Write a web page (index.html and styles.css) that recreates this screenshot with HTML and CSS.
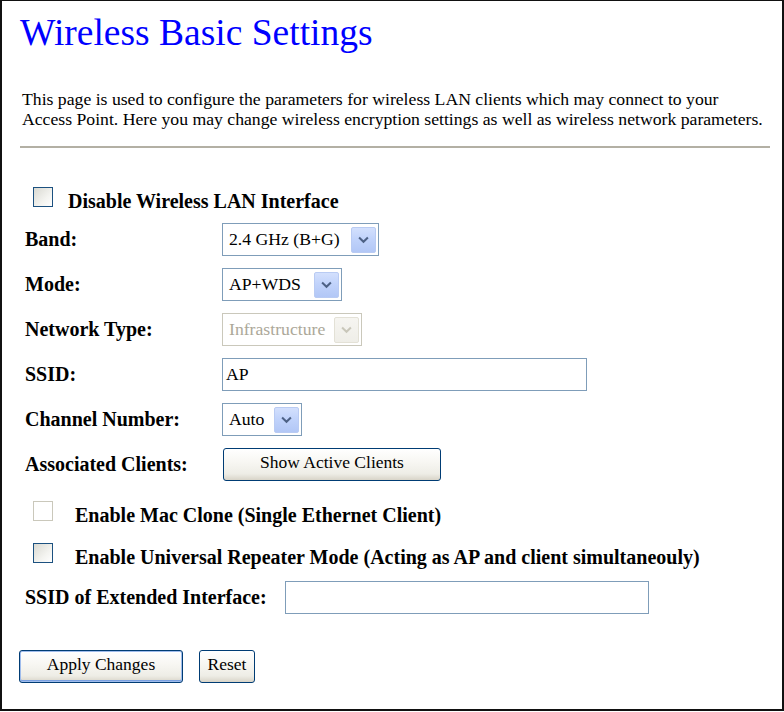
FILE: index.html
```html
<!DOCTYPE html>
<html>
<head>
<meta charset="utf-8">
<title>Wireless Basic Settings</title>
<link rel="stylesheet" href="styles.css">
</head>
<body>
<div class="frame">
  <h1 class="title">Wireless Basic Settings</h1>
  <p class="intro">This page is used to configure the parameters for wireless LAN clients which may connect to your<br>Access Point. Here you may change wireless encryption settings as well as wireless network parameters.</p>
  <hr class="rule">

  <div class="check-row first">
    <span class="box"></span>
    <span class="check-label">Disable Wireless LAN Interface</span>
  </div>

  <div class="fields">
    <div class="label">Band:</div>
    <div class="select w-band"><span class="val">2.4 GHz (B+G)</span><span class="arrow"><svg viewBox="0 0 25 25" width="25" height="25"><path d="M8.5 10.5 L12.5 14.5 L16.5 10.5" /></svg></span></div>

    <div class="label">Mode:</div>
    <div class="select w-mode"><span class="val">AP+WDS</span><span class="arrow"><svg viewBox="0 0 25 25" width="25" height="25"><path d="M8.5 10.5 L12.5 14.5 L16.5 10.5" /></svg></span></div>

    <div class="label">Network Type:</div>
    <div class="select w-type disabled"><span class="val">Infrastructure</span><span class="arrow"><svg viewBox="0 0 25 25" width="25" height="25"><path d="M8.5 10.5 L12.5 14.5 L16.5 10.5" /></svg></span></div>

    <div class="label">SSID:</div>
    <div class="text-input w-ssid">AP</div>

    <div class="label">Channel Number:</div>
    <div class="select w-chan"><span class="val">Auto</span><span class="arrow"><svg viewBox="0 0 25 25" width="25" height="25"><path d="M8.5 10.5 L12.5 14.5 L16.5 10.5" /></svg></span></div>

    <div class="label">Associated Clients:</div>
    <div><button class="btn w-show" type="button">Show Active Clients</button></div>
  </div>

  <div class="check-row second">
    <span class="box disabled"></span>
    <span class="check-label">Enable Mac Clone (Single Ethernet Client)</span>
  </div>

  <div class="check-row third">
    <span class="box"></span>
    <span class="check-label">Enable Universal Repeater Mode (Acting as AP and client simultaneouly)</span>
  </div>

  <div class="ext-row">
    <div class="label ext-label">SSID of Extended Interface:</div>
    <div class="text-input w-ext"></div>
  </div>

  <div class="actions">
    <button class="btn default w-apply" type="button">Apply Changes</button>
    <button class="btn w-reset" type="button">Reset</button>
  </div>
</div>
</body>
</html>
```

FILE: styles.css
```css
html, body {
  margin: 0;
  padding: 0;
  background: #ffffff;
}

body {
  font-family: "Liberation Serif", "Times New Roman", serif;
  color: #000000;
}

.frame {
  box-sizing: border-box;
  width: 784px;
  height: 711px;
  border: 2px solid #111111;
  border-top-width: 1px;
  padding: 10px 0 0 18px;
}

.title {
  margin: 0;
  font-size: 37.5px;
  line-height: 43px;
  font-weight: normal;
  color: #0000ff;
}

.intro {
  margin: 35px 0 0 2px;
  font-size: 17.7px;
  line-height: 20px;
  white-space: nowrap;
}

.rule {
  display: block;
  margin: 17px 0 0 0;
  width: 750px;
  height: 2px;
  border: 0;
  background: #b3b0a4;
}

.check-row {
  display: flex;
  align-items: flex-start;
  margin-left: 13px;
}

.check-row.first { margin-top: 39px; }
.check-row.second { margin-top: 20px; }
.check-row.third { margin-top: 17px; }

.box {
  flex: none;
  box-sizing: border-box;
  width: 20px;
  height: 20px;
  border: 1px solid #1c5180;
  background: linear-gradient(135deg, #d9d9d2 0%, #f3f3ef 60%, #ffffff 100%);
}

.box.disabled {
  border-color: #cac8bb;
  background: #ffffff;
}

.check-label {
  font-size: 20px;
  font-weight: bold;
  line-height: 22px;
  margin-top: 3px;
  white-space: nowrap;
}

.first .check-label { margin-left: 15px; }
.second .check-label,
.third .check-label { margin-left: 22px; }

.fields {
  display: grid;
  grid-template-columns: 197px auto;
  grid-auto-rows: 33px;
  row-gap: 12px;
  align-items: center;
  justify-items: start;
  margin: 11px 0 0 5px;
}

.label {
  font-size: 20px;
  font-weight: bold;
  white-space: nowrap;
}

.select {
  box-sizing: border-box;
  height: 33px;
  display: flex;
  align-items: center;
  justify-content: space-between;
  border: 1px solid #7f9db9;
  background: #ffffff;
  padding: 0 2px 0 6px;
  font-size: 17.7px;
  white-space: nowrap;
}

.arrow {
  box-sizing: border-box;
  width: 25px;
  height: 26px;
  border: 1px solid #b9cbf3;
  border-radius: 2px;
  background: linear-gradient(180deg, #d3e0fd 0%, #c1d3fb 45%, #b2c7f6 100%);
  display: flex;
  align-items: center;
  justify-content: center;
}

.arrow svg {
  display: block;
  width: 23px;
  height: 24px;
}

.arrow path {
  fill: none;
  stroke: #4d6185;
  stroke-width: 2.2;
  stroke-linecap: square;
}

.select.disabled {
  border-color: #cac8bb;
  color: #aca899;
}

.select.disabled .arrow {
  border-color: #e3e1d6;
  background: linear-gradient(180deg, #f6f5f1 0%, #efeee8 100%);
}

.select.disabled .arrow path {
  stroke: #c9c7ba;
}

.w-band { width: 157px; }
.w-mode { width: 120px; }
.w-type { width: 140px; }
.w-chan { width: 80px; }

.text-input {
  box-sizing: border-box;
  height: 33px;
  border: 1px solid #7f9db9;
  background: #ffffff;
  padding: 0 3px;
  font-size: 17.7px;
  line-height: 31px;
}

.w-ssid { width: 365px; }
.w-ext { width: 364px; }

.btn {
  box-sizing: border-box;
  height: 33px;
  margin: 0;
  padding: 0 0 4px 0;
  border: 1px solid #003c74;
  border-radius: 3px;
  background: linear-gradient(180deg, #ffffff 0%, #f8f7f3 40%, #eeede6 80%, #d8d4c8 100%);
  font-family: "Liberation Serif", "Times New Roman", serif;
  font-size: 17.5px;
  color: #000000;
  white-space: nowrap;
}

.btn.default {
  box-shadow: inset 0 0 0 1px #9fbcec, inset 0 -1px 0 1px #7aa0e0;
}

.w-show { width: 218px; margin-left: 1px; }
.w-apply { width: 164px; }
.w-reset { width: 56px; }

.ext-row {
  display: flex;
  align-items: center;
  margin: 13px 0 0 5px;
}

.ext-label {
  width: 260px;
}

.actions {
  display: flex;
  gap: 16px;
  margin: 36px 0 0 -1px;
}
```
